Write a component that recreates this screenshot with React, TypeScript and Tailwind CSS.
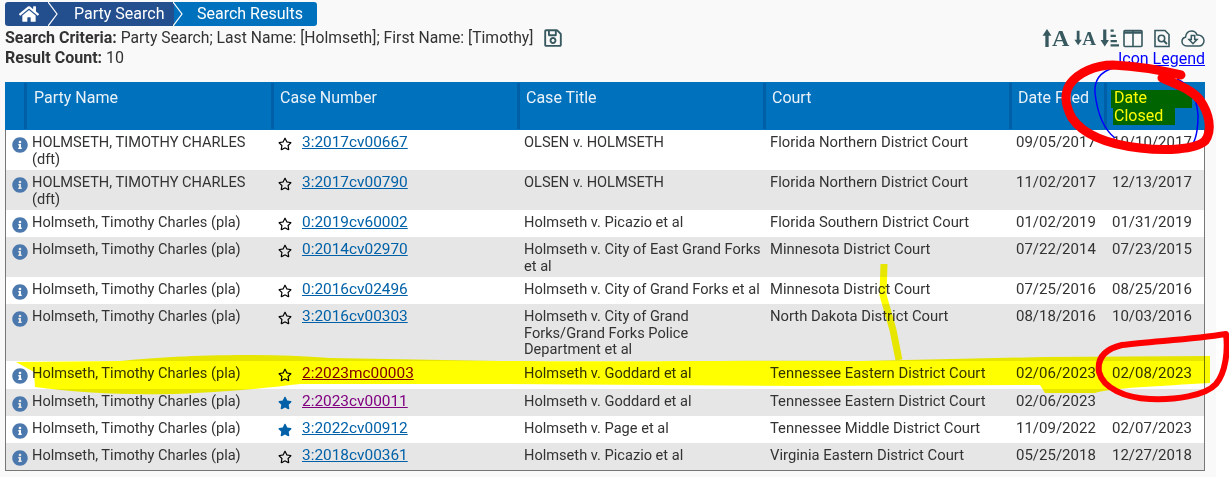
import React from 'react';
import { FaHome, FaInfoCircle, FaRegSave, FaRegStar, FaStar } from 'react-icons/fa';

interface CaseRow {
  party: string;
  starred?: boolean;
  number: string;
  visited?: boolean;
  title: string;
  court: string;
  filed: string;
  closed: string;
}

const rows: CaseRow[] = [
  { party: 'HOLMSETH, TIMOTHY CHARLES (dft)', number: '3:2017cv00667', title: 'OLSEN v. HOLMSETH', court: 'Florida Northern District Court', filed: '09/05/2017', closed: '10/10/2017' },
  { party: 'HOLMSETH, TIMOTHY CHARLES (dft)', number: '3:2017cv00790', title: 'OLSEN v. HOLMSETH', court: 'Florida Northern District Court', filed: '11/02/2017', closed: '12/13/2017' },
  { party: 'Holmseth, Timothy Charles (pla)', number: '0:2019cv60002', title: 'Holmseth v. Picazio et al', court: 'Florida Southern District Court', filed: '01/02/2019', closed: '01/31/2019' },
  { party: 'Holmseth, Timothy Charles (pla)', number: '0:2014cv02970', title: 'Holmseth v. City of East Grand Forks et al', court: 'Minnesota District Court', filed: '07/22/2014', closed: '07/23/2015' },
  { party: 'Holmseth, Timothy Charles (pla)', number: '0:2016cv02496', title: 'Holmseth v. City of Grand Forks et al', court: 'Minnesota District Court', filed: '07/25/2016', closed: '08/25/2016' },
  { party: 'Holmseth, Timothy Charles (pla)', number: '3:2016cv00303', title: 'Holmseth v. City of Grand Forks/Grand Forks Police Department et al', court: 'North Dakota District Court', filed: '08/18/2016', closed: '10/03/2016' },
  { party: 'Holmseth, Timothy Charles (pla)', number: '2:2023mc00003', visited: true, title: 'Holmseth v. Goddard et al', court: 'Tennessee Eastern District Court', filed: '02/06/2023', closed: '02/08/2023' },
  { party: 'Holmseth, Timothy Charles (pla)', starred: true, number: '2:2023cv00011', visited: true, title: 'Holmseth v. Goddard et al', court: 'Tennessee Eastern District Court', filed: '02/06/2023', closed: '' },
  { party: 'Holmseth, Timothy Charles (pla)', starred: true, number: '3:2022cv00912', title: 'Holmseth v. Page et al', court: 'Tennessee Middle District Court', filed: '11/09/2022', closed: '02/07/2023' },
  { party: 'Holmseth, Timothy Charles (pla)', number: '3:2018cv00361', title: 'Holmseth v. Picazio et al', court: 'Virginia Eastern District Court', filed: '05/25/2018', closed: '12/27/2018' },
];

const Chevron = () => (
  <svg className="absolute right-[-9px] top-0 z-10 h-6 w-[10px]" viewBox="0 0 10 24" fill="none">
    <path d="M0 0 L9 12 L0 24" stroke="#fff" strokeWidth="1.2" />
  </svg>
);

const HeaderCell = ({ children, w }: { children: React.ReactNode; w: string }) => (
  <div className={`flex h-full items-start border-l-[3px] border-[#005fa6] pl-[6px] pt-[6px] ${w}`}>{children}</div>
);

const Toolbar = () => (
  <div className="-mt-[2px] flex items-center justify-end gap-[4px] text-[#37595f]">
    <span className="flex w-[28px] items-center">
      <svg className="h-[20px] w-[10px]" viewBox="0 0 9 18" fill="currentColor"><path d="M4.5 1 L8.5 7 H6 V17 H3 V7 H.5 Z" /></svg>
      <span className="font-['Liberation_Serif',serif] text-[24px] font-bold leading-none">A</span>
    </span>
    <span className="flex w-[22px] items-center">
      <svg className="h-[20px] w-[10px]" viewBox="0 0 9 18" fill="currentColor"><path d="M4.5 17 L8.5 11 H6 V1 H3 V11 H.5 Z" /></svg>
      <span className="font-['Liberation_Serif',serif] text-[19px] font-bold leading-none">A</span>
    </span>
    <svg className="h-[20px] w-[19px]" viewBox="0 0 18 18" fill="currentColor">
      <path d="M4.5 17 L8.5 11 H6 V1 H3 V11 H.5 Z" />
      <path d="M10 1h3v2h-3zM10 6h5v2h-5zM10 11h6v2h-6zM10 15h8v2h-8z" />
    </svg>
    <svg className="h-[19px] w-[20px]" viewBox="0 0 20 18" fill="none" stroke="currentColor" strokeWidth="1.6">
      <rect x="1" y="1" width="18" height="16" rx="1" />
      <path d="M10 1v16" />
      <path d="M1 3h18" strokeWidth="2.5" />
    </svg>
    <svg className="ml-[7px] h-[19px] w-[16px]" viewBox="0 0 16 18" fill="none" stroke="currentColor" strokeWidth="1.6">
      <path d="M1 1h10l4 4v12H1z" />
      <circle cx="7.5" cy="9" r="3.2" />
      <path d="M10 11.5l3 3" strokeWidth="2" />
    </svg>
    <svg className="ml-[7px] h-[19px] w-[24px]" viewBox="0 0 24 18" fill="none" stroke="currentColor" strokeWidth="1.5">
      <path d="M6 16.5 C2.5 16.5 1 14 1 12 C1 9.5 2.8 8 4.5 7.7 C5 4 7.5 1.5 10.5 1.5 C13.5 1.5 15.3 3.3 16 5.5 C19.5 5 23 7.5 23 11.3 C23 14.5 20.5 16.5 18 16.5 Z" />
      <path d="M10.3 6h3.4v4h2.3l-4 4.2-4-4.2h2.3z" />
    </svg>
  </div>
);

// highlighter and marker strokes sitting over the table
const Scribbles = () => (
  <>
    <svg className="pointer-events-none absolute left-0 top-0 h-[477px] w-[1229px] mix-blend-multiply" viewBox="0 0 1229 477" fill="none">
      <path fill="#ffff00" d="M16 362 L120 361 C170 356 250 352 330 358 L500 361 C640 362 760 360 860 361 L1045 357 L1210 356 L1210 383 C1160 386 1110 388 1095 393 L1045 393 L1040 385 L800 386 L500 384 L300 384 C200 396 120 398 35 387 L34 372 Z" />
      <path stroke="#ffff00" strokeWidth="7" d="M884 264 L883 295 L893 330 L899 360" />
    </svg>
    <svg className="pointer-events-none absolute left-0 top-0 h-[477px] w-[1229px]" viewBox="0 0 1229 477" fill="none">
      <path stroke="#0000ff" strokeWidth="1.5" d="M1113 68 C1100 72 1094 80 1095 93 C1097 110 1102 128 1115 138" />
      <path stroke="#0000ff" strokeWidth="1.5" d="M1177 79 C1192 86 1197 100 1198 115 C1198 128 1197 138 1192 145" />
      <path stroke="#ff0000" strokeWidth="9" strokeLinecap="round" strokeLinejoin="round" d="M1181 75 C1160 70 1135 66 1113 65 C1095 65 1078 73 1070 84 C1063 95 1066 107 1072 118 C1082 133 1105 144 1140 148 C1165 151 1195 150 1205 141 C1213 130 1209 113 1200 100 C1190 88 1175 84 1162 78" />
      <path stroke="#ff0000" strokeWidth="6" strokeLinecap="round" strokeLinejoin="round" d="M1226 334 C1190 340 1150 341 1122 345 C1105 349 1097 358 1099 372 C1103 388 1125 398 1150 399 C1175 400 1205 396 1216 384 C1226 372 1228 350 1226 334" />
    </svg>
  </>
);

export default function App() {
  return (
    <div className="relative h-[477px] w-[1229px] overflow-hidden bg-white font-['Roboto',sans-serif] text-[16px] leading-[18px] text-[#333]">
      <div className="h-full w-[1216px] bg-[#f9f9f9] px-[5px] pt-[2px]">
        {/* breadcrumb */}
        <div className="flex h-6 w-[312px] overflow-hidden rounded-[3px] text-white">
          <div className="relative flex w-[44px] items-center bg-[#244f8f] pl-[14px]">
            <FaHome className="text-[20px]" />
            <Chevron />
          </div>
          <div className="relative flex w-[125px] items-center bg-[#244f8f] pl-[25px]">
            Party Search
            <Chevron />
          </div>
          <div className="flex flex-1 items-center bg-[#0071bc] pl-[23px]">Search Results</div>
        </div>

        <div className="flex w-[1200px] justify-between pt-[2px]">
          <div>
            <div className="flex h-[20px] items-center">
              <span className="text-[15.7px]"><b className="text-[16px]">Search Criteria:</b> Party Search; Last Name: [Holmseth]; First Name: [Timothy]</span>
              <FaRegSave className="ml-[10px] text-[20px] text-[#37595f]" />
            </div>
            <div className="pt-[1px]"><b>Result Count:</b> 10</div>
          </div>
          <div className="flex flex-col items-end">
            <Toolbar />
            <a className="text-[#0000ff] underline">Icon Legend</a>
          </div>
        </div>

        {/* results table */}
        <div className="mt-[14px] w-[1200px] border-x border-b border-[#777]">
          <div className="-mx-px flex h-12 bg-[#0071bc] py-px text-[#eaf2f9]">
            <div className="w-[19px]" />
            <HeaderCell w="w-[247px]"><span className="pl-px">Party Name</span></HeaderCell>
            <HeaderCell w="w-[246px]">Case Number</HeaderCell>
            <HeaderCell w="w-[246px]">Case Title</HeaderCell>
            <HeaderCell w="w-[246px]">Court</HeaderCell>
            <HeaderCell w="w-[95px]">Date Filed</HeaderCell>
            <HeaderCell w="w-[100px]">
              <div className="relative ml-[1px] text-[#ffff00]">
                <span className="absolute left-[-3px] top-[1px] h-[18px] w-[81px] bg-[#006400]" />
                <span className="absolute left-[-1px] top-[19px] h-[17px] w-[62px] bg-[#006400]" />
                <span className="relative block w-[62px]">Date Closed</span>
              </div>
            </HeaderCell>
          </div>
          {rows.map((row, i) => (
            <div key={row.number} className={`flex text-[14.6px] leading-[16.5px] ${i === 6 ? 'min-h-[28px]' : 'min-h-[27px]'} ${i % 2 === 1 ? 'bg-[#e6e6e6]' : 'bg-white'}`}>
              <div className="w-[26px] pl-[6px] pt-[7px]">
                <FaInfoCircle className="text-[16px] text-[#4c79ad]" />
              </div>
              <div className="w-[241px] pb-[3px] pr-[6px] pt-[4px]">{row.party}</div>
              <div className="flex w-[246px] pb-[3px] pl-[5px] pt-[4px] text-[15.4px]">
                <span className="w-[24px] pt-[3px]">
                  {row.starred ? <FaStar className="text-[14px] text-[#0061a8]" /> : <FaRegStar className="text-[14px] text-black" />}
                </span>
                <a className={`underline ${row.visited ? 'text-[#800080]' : 'text-[#0061a8]'}`}>{row.number}</a>
              </div>
              <div className="w-[246px] pb-[3px] pl-[5px] pr-[2px] pt-[4px]">{row.title}</div>
              <div className="w-[246px] pb-[3px] pl-[5px] pt-[4px] text-[14.8px]">{row.court}</div>
              <div className="w-[96px] pb-[3px] pl-[5px] pt-[4px] text-[15px]">{row.filed}</div>
              <div className="flex-1 pb-[3px] pl-[5px] pt-[4px] text-[15px]">{row.closed}</div>
            </div>
          ))}
        </div>
      </div>
      <Scribbles />
    </div>
  );
}
